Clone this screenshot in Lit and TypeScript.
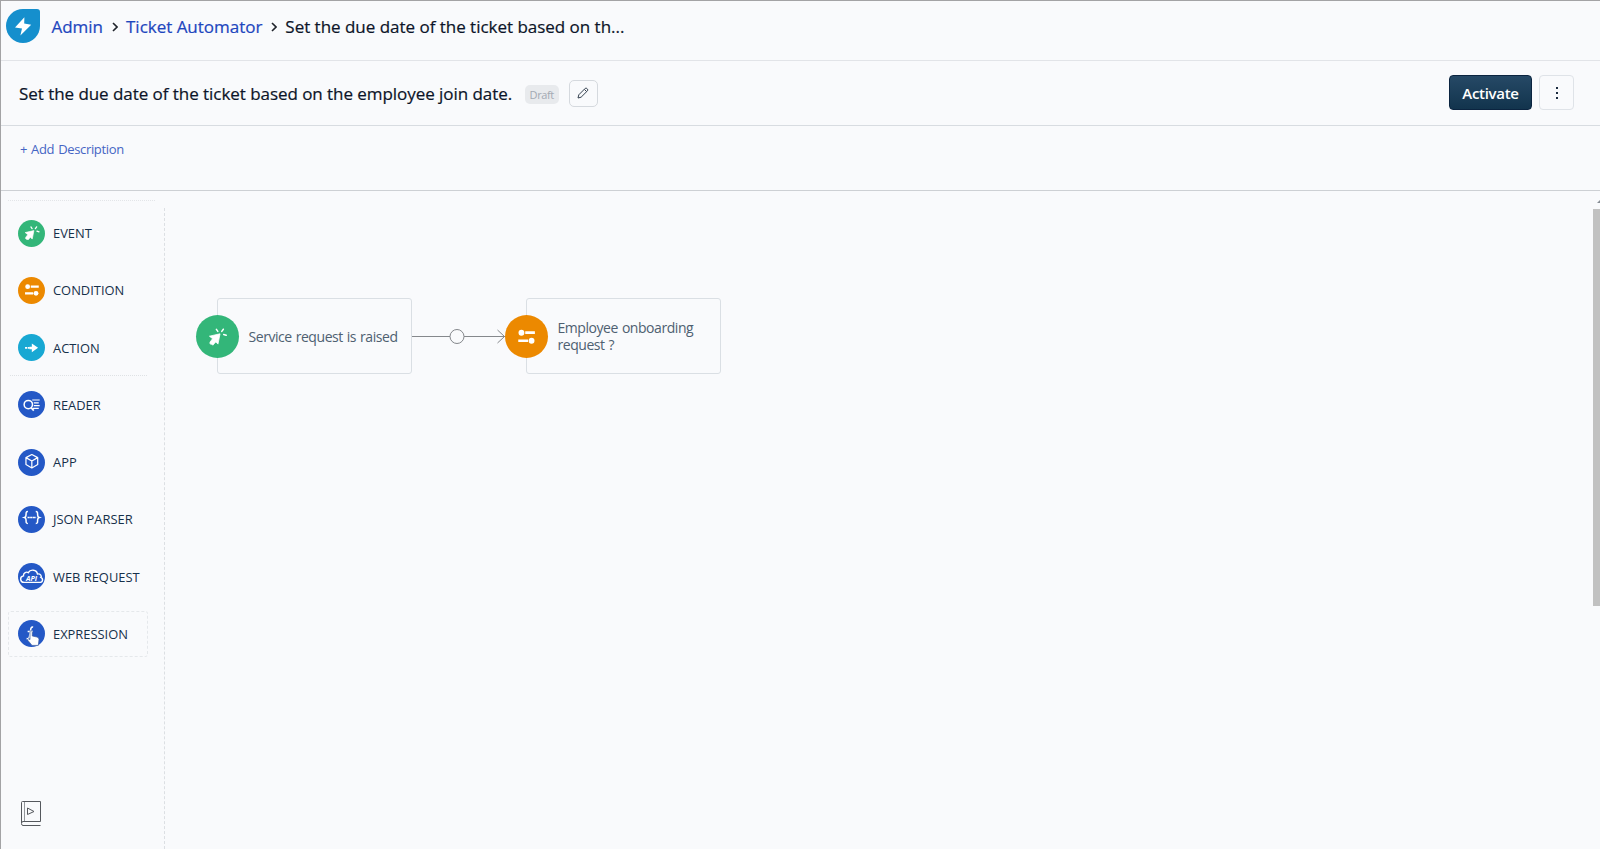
import { LitElement, html, svg, css } from 'lit';
import { customElement, property } from 'lit/decorators.js';
import { classMap } from 'lit/directives/class-map.js';

const icons: Record<string, unknown> = {
  event: svg`
    <path d="M1.8 11.6 L15.2 8.6 L12.6 21.6 L9.8 18.8 L6 23 L4.6 21.6 L3.6 22 L2.4 20.6 L2.6 19 L5.8 14.8 Z" fill="#fff" stroke="#fff" stroke-linejoin="round"/>
    <path d="M10.6 3 L12.4 5.6 M17.4 5.6 L19.4 2.8 M19.8 9.4 L23 10.4" stroke="#fff" stroke-width="1.9" stroke-linecap="round"/>`,
  condition: svg`
    <circle cx="5.6" cy="7.2" r="3.7" fill="#fff"/>
    <circle cx="18.4" cy="17.4" r="3.7" fill="#fff"/>
    <path d="M10.4 7.2 H22.6 M1.6 17.4 H14" stroke="#fff" stroke-width="3.4"/>`,
  action: svg`
    <path d="M12 5.4 L21.6 12 L12 18.6 V14 H8.4 V10.2 H12 Z" fill="#fff"/>
    <path d="M1.6 12.1 H4.8 M5.8 12.1 H8.8" stroke="#fff" stroke-width="3"/>`,
  reader: svg`
    <circle cx="6.6" cy="11.6" r="6.4" fill="none" stroke="#fff" stroke-width="2.3"/>
    <path d="M11 16.4 L15 20.8" stroke="#fff" stroke-width="2.6"/>
    <path d="M12.6 4.6 H24 M15 9 H22.6 M15 13.2 H24 M13.4 17.4 H22.6" stroke="#fff" stroke-width="1.9"/>`,
  app: svg`
    <path d="M12 0.8 L21 5.6 V16.2 L12 21.4 L3 16.2 V5.6 Z M3 5.6 L12 10.8 L21 5.6 M12 10.8 V21.4"
      fill="none" stroke="#fff" stroke-width="1.9" stroke-linejoin="round"/>`,
  json: svg`
    <path d="M6 .8 C3 .8 3.2 2.8 3.2 4.6 C3.2 7.4 3 9.4 .8 10 C3 10.6 3.2 12.4 3.2 15 C3.2 17.2 3 19.2 6 19.2
      M18 .8 C21 .8 20.8 2.8 20.8 4.6 C20.8 7.4 21 9.4 23.2 10 C21 10.6 20.8 12.4 20.8 15 C20.8 17.2 21 19.2 18 19.2"
      fill="none" stroke="#fff" stroke-width="2.3"/>
    <path d="M5.4 10 H18.6" stroke="#fff" stroke-width="2.2" stroke-dasharray="3.4 .6"/>`,
  web: svg`
    <path d="M0 20.6 C-6.4 20.6 -7 11.6 -.8 10.6 C-1.2 5.4 4 3.6 6.6 5.6 C9.6 0 19.6 .6 20.6 7.6 C25.6 7 27.6 11 25.8 12.8 C30 14.6 29 20.6 24 20.6 Z"
      fill="none" stroke="#fff" stroke-width="2.1"/>
    <text class="api" x="11.6" y="17.8" text-anchor="middle">API</text>`,
  expression: svg`
    <path d="M14 1.6 C10.6 1 10.4 4.4 10 7.2 L8.4 16.2 C7.8 19.4 6.4 19.8 4 19.2 M5.6 8.4 H13.8" fill="none" stroke="#fff" stroke-width="2.3"/>`
};

@customElement('round-icon')
export class RoundIcon extends LitElement {
  @property() kind = 'event';

  static styles = css`
  :host {
    display: block;
    flex: none;
    width: 27px;
    height: 27px;
  }
  .disc {
    width: 100%;
    height: 100%;
    border-radius: 50%;
    background: #2458c6;
    display: flex;
    align-items: center;
    justify-content: center;
  }
  .event {
    background: #33b679;
  }
  .condition {
    background: #ec8900;
  }
  .action {
    background: #18a8d3;
  }
  svg {
    width: var(--glyph, 58%);
    height: var(--glyph, 58%);
    overflow: visible;
  }
  .api {
    font: italic 700 11px "Open Sans", sans-serif;
    fill: #fff;
  }
  `;

  render() {
    return html`
    <div class=${classMap({ disc: true, [this.kind]: true })}>
      <svg viewBox="0 0 24 24">${icons[this.kind]}</svg>
    </div>
    `;
  }
}

@customElement('app-root')
export class AppRoot extends LitElement {
  tools = [
    { kind: 'event', label: 'EVENT' },
    { kind: 'condition', label: 'CONDITION' },
    { kind: 'action', label: 'ACTION', last: true },
    { kind: 'reader', label: 'READER' },
    { kind: 'app', label: 'APP' },
    { kind: 'json', label: 'JSON PARSER' },
    { kind: 'web', label: 'WEB REQUEST' },
    { kind: 'expression', label: 'EXPRESSION', active: true }
  ];

  static styles = css`
  :host {
    display: flex;
    flex-direction: column;
    box-sizing: border-box;
    height: 849px;
    overflow: hidden;
    background: #f9fafc;
    border-top: 1px solid #a3a3a5;
    border-left: 1px solid #a3a3a5;
    color: #0c1428;
    font-family: "Open Sans", "Noto Sans", sans-serif;
  }
  * {
    box-sizing: border-box;
  }
  .crumbs {
    height: 60px;
    flex: none;
    display: flex;
    align-items: center;
    padding: 0 0 8px 5px;
    border-bottom: 1px solid #e2e4e8;
    font-size: 17px;
    font-weight: 500;
    letter-spacing: -.02px;
    -webkit-text-stroke: .2px;
    white-space: nowrap;
  }
  .logo {
    width: 34px;
    height: 34px;
    margin: -2px 11.5px 0 0;
  }
  .crumb {
    color: #1d46be;
  }
  .chevron {
    width: 6px;
    height: 10px;
    margin: 0 8px 0 9px;
  }
  .titlebar {
    height: 65px;
    flex: none;
    display: flex;
    align-items: center;
    padding: 0 26px 0 18px;
    border-bottom: 1px solid #d8dce1;
    white-space: nowrap;
  }
  .title {
    font-size: 17px;
    font-weight: 500;
    letter-spacing: -.05px;
    -webkit-text-stroke: .2px;
  }
  .draft {
    margin-left: 12.5px;
    width: 34px;
    height: 19px;
    border-radius: 5px;
    background: #e8eaed;
    color: #a3a9b3;
    font-size: 11px;
    letter-spacing: -.4px;
    line-height: 19px;
    text-align: center;
    margin-top: 3px;
  }
  .edit {
    margin-left: 10px;
    width: 29px;
    height: 27px;
    border: 1px solid #d5d9de;
    border-radius: 5px;
    display: flex;
    align-items: center;
    justify-content: center;
  }
  .activate {
    margin-left: auto;
    width: 83px;
    height: 35px;
    border: 1px solid #0b2440;
    border-radius: 4px;
    background: linear-gradient(#264966, #12344d);
    color: #fff;
    font-size: 15px;
    font-weight: 600;
    letter-spacing: -.3px;
    line-height: 34px;
    text-align: center;
  }
  .more {
    margin-left: 7px;
    width: 35px;
    height: 35px;
    border: 1px solid #dfe3e8;
    border-radius: 4px;
    display: flex;
    flex-direction: column;
    align-items: center;
    justify-content: center;
    gap: 3px;
  }
  .activate, .more {
    margin-top: -1px;
  }
  .more i {
    width: 2px;
    height: 2px;
    background: #1c2c40;
  }
  .description {
    height: 65px;
    flex: none;
    padding: 14px 0 0 19px;
    border-bottom: 1px solid #cdd0d4;
    color: #4565c4;
    font-size: 13px;
    letter-spacing: -.35px;
    word-spacing: 1px;
    line-height: 18px;
  }
  .workspace {
    flex: 1;
    min-height: 0;
    display: flex;
  }
  .sidebar {
    width: 163px;
    flex: none;
    display: flex;
    flex-direction: column;
    padding: 9px 0 22px 7px;
  }
  .topline {
    width: 147px;
    height: 1px;
    flex: none;
    border-top: 1px dotted #e3e5e8;
    margin-bottom: 9px;
  }
  .tool {
    position: relative;
    width: 140px;
    height: 46px;
    flex: none;
    margin-bottom: 11.25px;
    padding-left: 9px;
    border: 1px solid transparent;
    border-radius: 3px;
    display: flex;
    align-items: center;
    gap: 8px;
    color: #16304a;
    font-size: 12.9px;
    white-space: nowrap;
  }
  .tool.last::after {
    content: "";
    position: absolute;
    left: 1px;
    bottom: -6px;
    width: 137px;
    border-top: 1px dotted #dfe2e5;
  }
  .tool.active {
    border: 1px dashed #e5e8eb;
  }
  .hand {
    position: absolute;
    left: 18px;
    top: 18px;
  }
  .guide {
    margin: auto 0 0 12px;
    width: 22px;
    height: 27px;
  }
  .divider {
    margin-top: 17px;
    border-left: 1px dashed #dcdfe3;
  }
  .canvas {
    position: relative;
    flex: 1;
  }
  .node {
    position: absolute;
    top: 107px;
    width: 195px;
    height: 76px;
    padding: 0 0 0 30.5px;
    border: 1px solid #dadfe4;
    border-radius: 3px;
    display: flex;
    align-items: center;
    color: #4e6071;
    font-size: 14px;
    letter-spacing: -.45px;
    word-spacing: .8px;
    line-height: 17px;
    white-space: nowrap;
  }
  .node round-icon {
    --glyph: 19px;
    position: absolute;
    left: -22px;
    top: 16px;
    width: 43px;
    height: 43px;
  }
  .first {
    left: 52px;
  }
  .second {
    left: 361px;
  }
  .link {
    position: absolute;
    left: 247px;
    top: 136px;
    width: 94px;
    height: 18px;
  }
  .scroll {
    width: 7px;
    padding-top: 8px;
  }
  .scroll svg {
    display: block;
    width: 7px;
    height: 10px;
  }
  .thumb {
    height: 397px;
    background: #c1c1c1;
  }
  `;

  render() {
    return html`
    <div class="crumbs">
      <svg class="logo" viewBox="0 0 34 34">
        <path d="M17 0 H31 Q34 0 34 3 V17 A17 17 0 0 1 0 17 A17 17 0 0 1 17 0 Z" fill="#158fcd"/>
        <path d="M18.4 8.2 L9 18.4 L16 19.4 L14.4 26.6 L25.2 15.8 L18.2 14.6 Z" fill="#fff"/>
      </svg>
      <span class="crumb">Admin</span>
      ${this.chevron()}
      <span class="crumb">Ticket Automator</span>
      ${this.chevron()}
      <span>Set the due date of the ticket based on th...</span>
    </div>

    <div class="titlebar">
      <span class="title">Set the due date of the ticket based on the employee join date.</span>
      <span class="draft">Draft</span>
      <span class="edit">
        <svg width="12" height="12" viewBox="0 0 12 12" fill="none" stroke="#34414f" stroke-linejoin="round">
          <path d="M1 11 L1.8 7.8 L8.2 1.4 Q9 .7 9.9 1.5 L10.5 2.1 Q11.2 3 10.5 3.8 L4.1 10.2 Z M7.4 2.4 L9.6 4.6"/>
        </svg>
      </span>
      <span class="activate">Activate</span>
      <span class="more"><i></i><i></i><i></i></span>
    </div>

    <div class="description">+ Add Description</div>

    <div class="workspace">
      <div class="sidebar">
        <div class="topline"></div>
        ${this.tools.map(tool => html`
        <div class=${classMap({ tool: true, last: !!tool.last, active: !!tool.active })}>
          <round-icon kind=${tool.kind}></round-icon>
          <span>${tool.label}</span>
          ${tool.active ? this.hand() : ''}
        </div>`)}
        <svg class="guide" viewBox="0 0 22 27" fill="none" stroke="#55585d">
          <path d="M1.5 23 V2.5 Q1.5 1.5 2.5 1.5 H20.5 V21.5 H3 Q1.5 21.5 1.5 23.5 Q1.5 25.5 3 25.5 H20.5"/>
          <path d="M4.5 2 V21" stroke="#94979b"/>
          <path d="M7.5 8 V14.5 L14 11.5 Z" stroke-linejoin="round"/>
        </svg>
      </div>
      <div class="divider"></div>
      <div class="canvas">
        <div class="node first">
          <round-icon kind="event"></round-icon>
          <span>Service request is raised</span>
        </div>
        <svg class="link" viewBox="0 0 94 18" fill="none" stroke="#85888c">
          <path d="M0 9.5 H38 M52 9.5 H93 M85.5 3 L92.5 9.5 L85.5 16"/>
          <circle cx="45" cy="9.5" r="7"/>
        </svg>
        <div class="node second">
          <round-icon kind="condition"></round-icon>
          <span>Employee onboarding<br>request ?</span>
        </div>
      </div>
      <div class="scroll">
        <svg viewBox="0 0 7 10"><path d="M4 4 L7 1 V4 Z" fill="#858c94"/></svg>
        <div class="thumb"></div>
      </div>
    </div>
    `;
  }

  chevron() {
    return html`<svg class="chevron" viewBox="0 0 6 10"><path d="M1 1 L5 5 L1 9" fill="none" stroke="#20242c" stroke-width="1.6"/></svg>`;
  }

  hand() {
    return html`
    <svg class="hand" width="13" height="16" viewBox="0 0 13 16">
      <path d="M3 1.8 Q3 .6 4.1 .6 Q5.3 .6 5.3 1.8 V6 L10 7 Q12.2 7.6 12 9.6 L11.3 15.4 H5 L.9 10.4 Q.3 9.2 1.5 8.8 L3 9.6 Z"
        fill="#fff" stroke="#3b5b9d" stroke-width=".7"/>
    </svg>`;
  }
}
